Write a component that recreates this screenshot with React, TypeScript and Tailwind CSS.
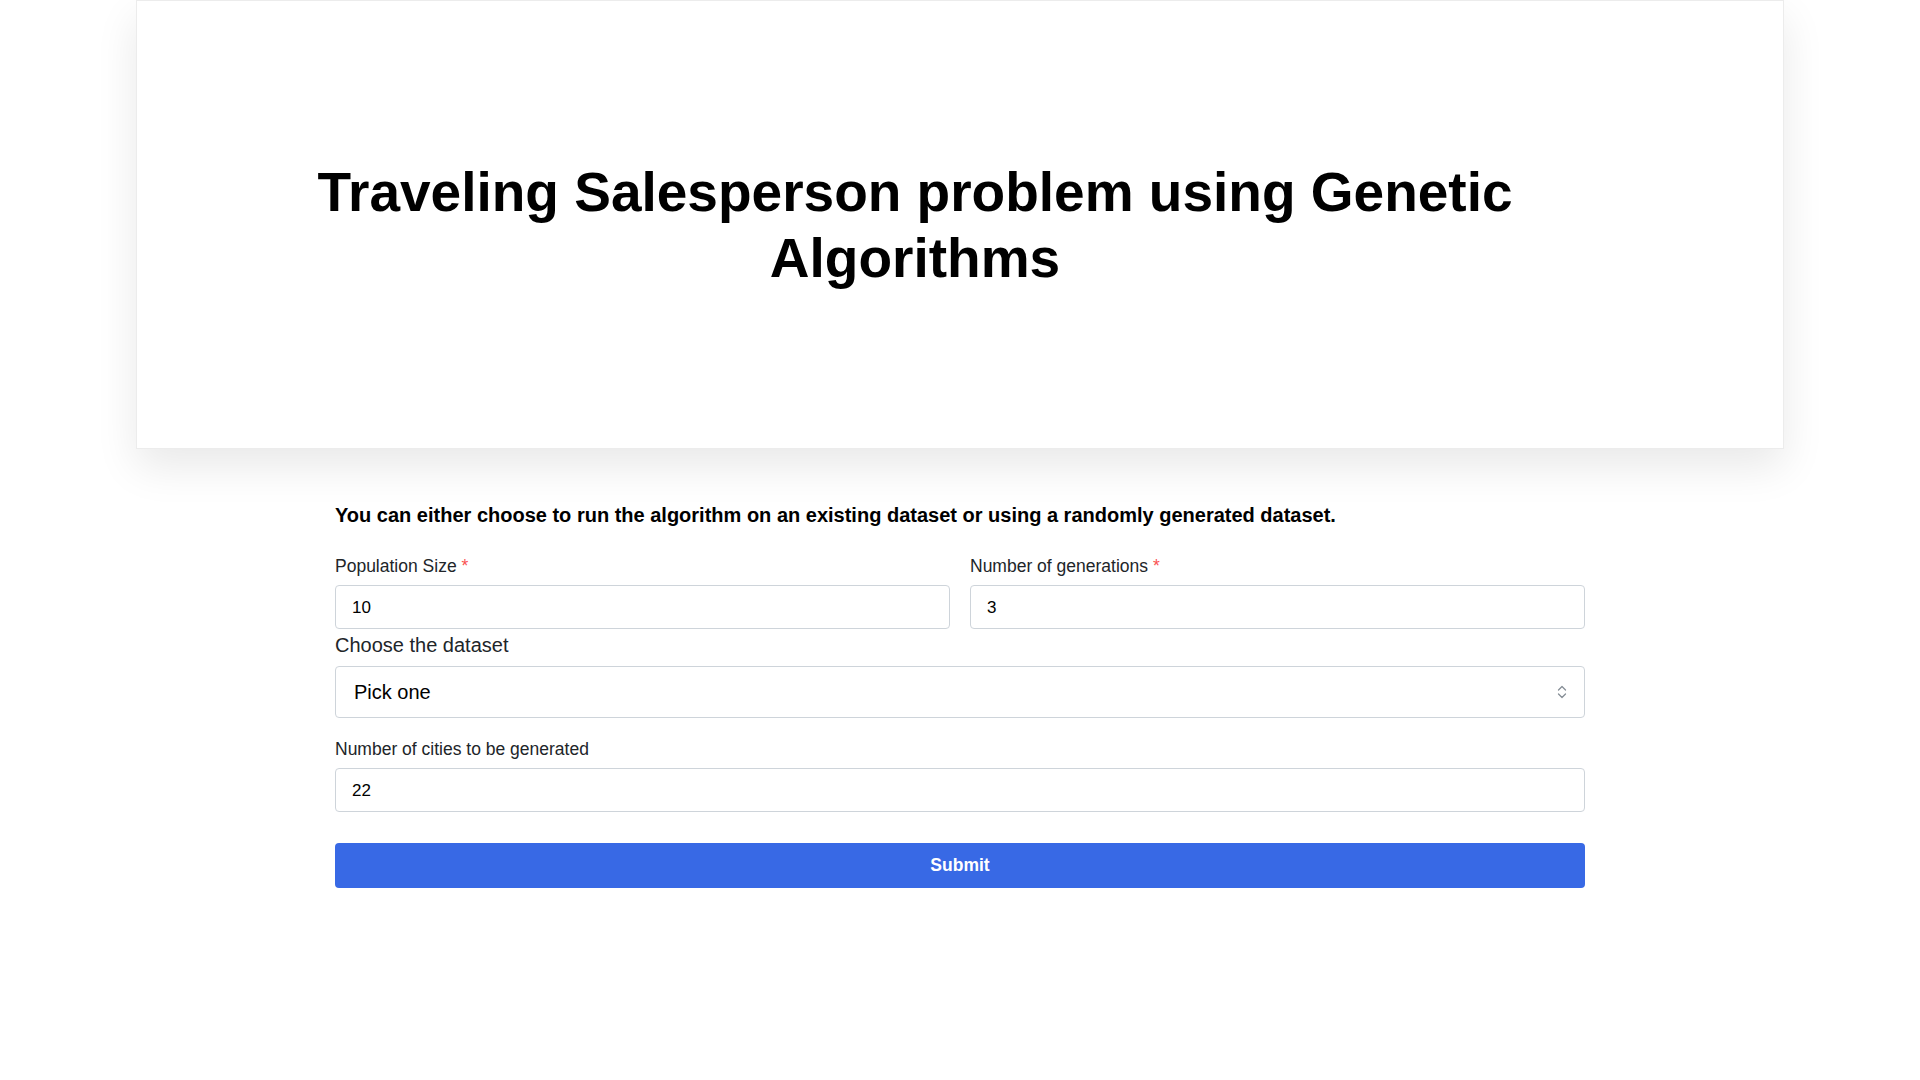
import React from "react";

function Label({ text, required }: { text: string; required?: boolean }) {
  return (
    <label className="block text-[17.5px] leading-[27px] mb-[5px] text-[#212529]">
      {text}
      {required && <span className="text-[#fa5252]"> *</span>}
    </label>
  );
}

function TextInput({ value }: { value: string }) {
  return (
    <input
      readOnly
      value={value}
      className="block w-full h-[44px] px-[16px] pt-[1px] text-[17px] text-black bg-white border border-[#ced4da] rounded-[4px] outline-none"
      style={{ fontFamily: '"Liberation Sans", Arial, sans-serif' }}
    />
  );
}

export default function App() {
  return (
    <div
      className="min-h-screen bg-white text-black"
      style={{ fontFamily: '"Liberation Sans", Arial, sans-serif' }}
    >
      <div className="mx-[136px] h-[449px] bg-white border border-[#ececec] shadow-[0_18px_40px_rgba(0,0,0,0.09)] flex items-center justify-center pr-[90px]">
        <h1 className="max-w-[1300px] text-center font-bold text-[55px] leading-[66px] text-black">
          Traveling Salesperson problem using Genetic Algorithms
        </h1>
      </div>

      <div className="w-[1250px] mx-auto">
        <p className="mt-[52px] text-[20px] leading-[28px] font-bold text-black">
          You can either choose to run the algorithm on an existing dataset or using a randomly generated dataset.
        </p>

        <div className="mt-[24px] grid grid-cols-2 gap-[20px]">
          <div>
            <Label text="Population Size" required />
            <TextInput value="10" />
          </div>
          <div>
            <Label text="Number of generations" required />
            <TextInput value="3" />
          </div>
        </div>

        <div className="pt-[1px]">
          <div className="text-[20px] leading-[31px] mb-[5px] text-[#212529]">Choose the dataset</div>
          <div className="relative h-[52px] border border-[#ced4da] rounded-[4px] bg-white flex items-center pl-[18px]">
            <span className="text-[20px] text-black">Pick one</span>
            <svg
              className="absolute right-[16px] top-1/2 -translate-y-1/2"
              width="12"
              height="16"
              viewBox="0 0 12 16"
              fill="none"
              stroke="#868e96"
              strokeWidth="1.3"
              strokeLinecap="round"
              strokeLinejoin="round"
            >
              <path d="M2.5 6 L6 2.5 L9.5 6" />
              <path d="M2.5 10 L6 13.5 L9.5 10" />
            </svg>
          </div>
        </div>

        <div className="mt-[18px]">
          <Label text="Number of cities to be generated" />
          <TextInput value="22" />
        </div>

        <button className="mt-[31px] w-full h-[45px] rounded-[4px] bg-[#3869e5] text-white font-bold text-[17.5px]">
          Submit
        </button>
      </div>
    </div>
  );
}
